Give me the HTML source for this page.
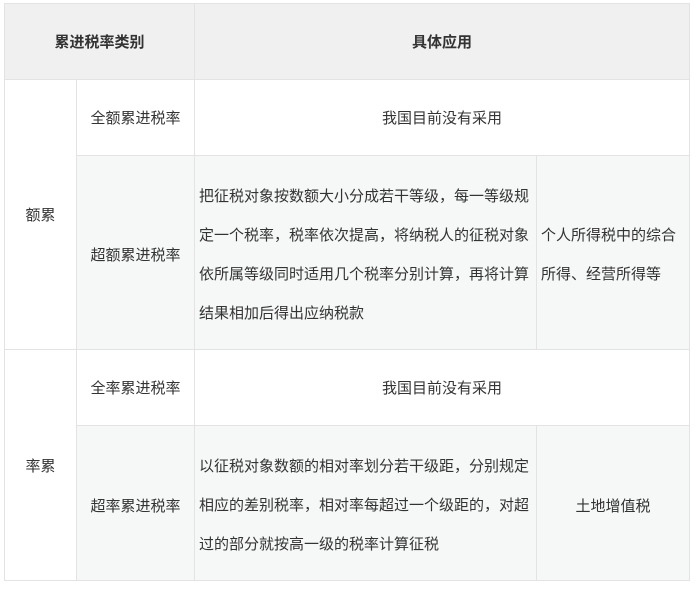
<!DOCTYPE html>
<html><head><meta charset="utf-8"><style>
body{margin:0;width:700px;height:589px;background:#fff;font-family:"Liberation Sans","Noto Sans CJK SC",sans-serif;font-size:15px;color:#333;position:relative;overflow:hidden}
.c{position:absolute;box-sizing:border-box;display:flex;align-items:center;justify-content:center;text-align:center;border:1px solid #e3e3e3;margin:-1px 0 0 -1px}
.g{background:#f6f7f7;padding-top:4px}
.h{background:#f0f0f0;font-weight:bold}
.t{justify-content:flex-start;text-align:left;padding:4px 3px 0 4px;line-height:39px}
</style></head><body>
<div class="c h" style="left:5px;top:4px;width:191px;height:77px">累进税率类别</div>
<div class="c h" style="left:195px;top:4px;width:496px;height:77px">具体应用</div>
<div class="c" style="left:5px;top:80px;width:73px;height:271px">额累</div>
<div class="c" style="left:77px;top:80px;width:119px;height:77px">全额累进税率</div>
<div class="c" style="left:195px;top:80px;width:496px;height:77px">我国目前没有采用</div>
<div class="c g" style="left:77px;top:156px;width:119px;height:195px">超额累进税率</div>
<div class="c g t" style="left:195px;top:156px;width:343px;height:195px">把征税对象按数额大小分成若干等级，每一等级规定一个税率，税率依次提高，将纳税人的征税对象依所属等级同时适用几个税率分别计算，再将计算结果相加后得出应纳税款</div>
<div class="c g t" style="left:537px;top:156px;width:154px;height:195px">个人所得税中的综合所得、经营所得等</div>
<div class="c" style="left:5px;top:350px;width:73px;height:232px">率累</div>
<div class="c" style="left:77px;top:350px;width:119px;height:77px">全率累进税率</div>
<div class="c" style="left:195px;top:350px;width:496px;height:77px">我国目前没有采用</div>
<div class="c g" style="left:77px;top:426px;width:119px;height:156px">超率累进税率</div>
<div class="c g t" style="left:195px;top:426px;width:343px;height:156px">以征税对象数额的相对率划分若干级距，分别规定相应的差别税率，相对率每超过一个级距的，对超过的部分就按高一级的税率计算征税</div>
<div class="c g" style="left:537px;top:426px;width:154px;height:156px">土地增值税</div>
</body></html>
